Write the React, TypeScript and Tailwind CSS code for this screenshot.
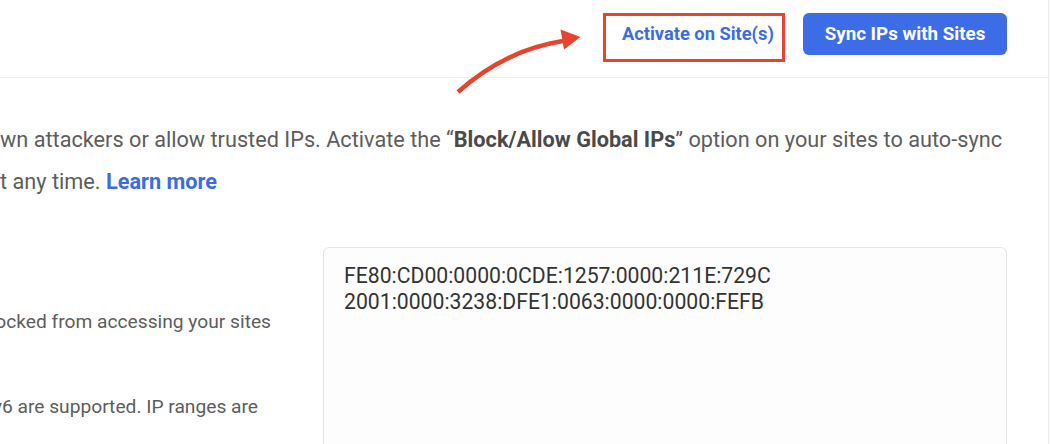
import React from "react";

export default function App() {
  return (
    <div className="relative w-[1050px] h-[444px] overflow-hidden bg-white font-['Roboto',sans-serif]">
      <div className="w-[1049px] h-full border-r border-[#ebebeb] flex flex-col">
        <header className="h-[78px] shrink-0 border-b border-[#efefef] flex items-start justify-end gap-[18px] pt-[13px] pr-[41px]">
          <div className="w-[182px] h-[49px] border-[3px] border-[#e8432d] flex items-start pl-[16px] pt-[7px]">
            <button className="text-[18.3px] leading-[22px] font-bold text-[#3a6ce4] whitespace-nowrap">
              Activate on Site(s)
            </button>
          </div>
          <button className="h-[42px] w-[204px] rounded-[6px] bg-[#3d6de6] text-white font-bold text-[18.75px] leading-[22px] whitespace-nowrap">
            Sync IPs with Sites
          </button>
        </header>

        <div className="pt-[41px] text-[21.7px] leading-[42px] text-[#5d5d5d]">
          <div className="flex justify-end w-[1002px]">
            <p className="shrink-0 whitespace-nowrap">
              Block known attackers or allow trusted IPs. Activate the “
              <b className="font-bold text-[#4a4a4a]">Block/Allow Global IPs</b>” option on your sites to auto-sync
            </p>
          </div>
          <div className="flex justify-end w-[217px]">
            <p className="shrink-0 whitespace-nowrap">
              these lists. You can turn it off at any time.{" "}
              <a className="font-bold text-[#3a6ce4]">Learn more</a>
            </p>
          </div>
        </div>

        <div className="mt-[44px] flex pr-[41px]">
          <div className="w-[323px] shrink-0 pt-[61px] text-[19.2px] leading-[28px] text-[#5d5d5d]">
            <div className="flex justify-end w-[271px]">
              <p className="shrink-0 whitespace-nowrap">IPs that will be blocked from accessing your sites</p>
            </div>
            <div className="flex justify-end w-[258px] mt-[57px]">
              <p className="shrink-0 whitespace-nowrap">Both IPv4 and IPv6 are supported. IP ranges are</p>
            </div>
          </div>
          <div className="flex-1 h-[220px] border border-[#e4e4e4] rounded-[6px] bg-[#fdfdfd] pl-[20px] pt-[15px] text-[21.2px] leading-[25.7px] text-[#333333] whitespace-pre">
            {"FE80:CD00:0000:0CDE:1257:0000:211E:729C\n2001:0000:3238:DFE1:0063:0000:0000:FEFB"}
          </div>
        </div>
      </div>

      <svg
        className="absolute left-0 top-0 pointer-events-none"
        width="1050"
        height="444"
        viewBox="0 0 1050 444"
      >
        <path d="M458,92 Q505,50 563,41" fill="none" stroke="#e8432d" strokeWidth="4.5" strokeLinecap="butt" />
        <polygon points="560.5,29.5 580.5,37 564,49.5" fill="#e8432d" />
      </svg>
    </div>
  );
}
